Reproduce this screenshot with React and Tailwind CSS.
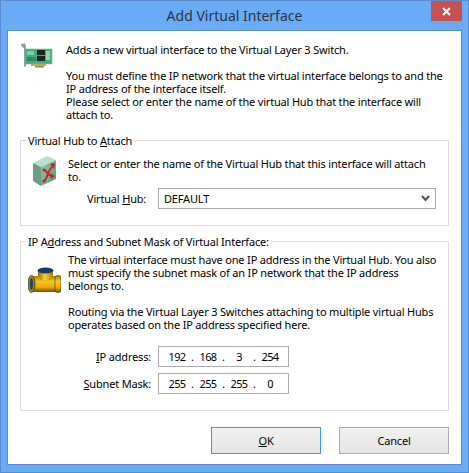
function NicIcon() {
  return (
    <svg width="34" height="28" viewBox="0 0 34 28" className="shrink-0">
      <path d="M1 1 L5 0.5 L6 3 L6 23 L4 24 L4 5 L2 4 Z" fill="#9a9a9a" />
      <rect x="5" y="6" width="27" height="15" fill="#3fae7c" />
      <rect x="5" y="6" width="27" height="15" fill="none" stroke="#6fc89c" strokeWidth="0.6" />
      <rect x="7" y="8" width="7" height="4" fill="#7fd0a4" />
      <rect x="7" y="14" width="9" height="4" fill="#2b8a5e" />
      <rect x="17" y="7" width="8" height="5" fill="#1d2420" />
      <rect x="17" y="13" width="8" height="5" fill="#1d2420" />
      <rect x="26" y="8" width="4" height="9" fill="#8fd8b0" />
      <rect x="11" y="21" width="15" height="2" fill="#c9a84a" />
      <rect x="15" y="23" width="9" height="1.5" fill="#8a8a6a" />
    </svg>
  )
}

function HubIcon() {
  return (
    <svg width="26" height="32" viewBox="0 0 26 32" className="shrink-0">
      <defs>
        <linearGradient id="hubFront" x1="0" y1="0" x2="1" y2="1">
          <stop offset="0" stopColor="#8ccbac" />
          <stop offset="1" stopColor="#4f9c7c" />
        </linearGradient>
      </defs>
      <path d="M1 8 L15 1 L24 5 L9 12 Z" fill="#b8e0cc" />
      <path d="M1 8 L9 12 L9 31 L1 26 Z" fill="#6f9a88" />
      <path d="M9 12 L24 5 L24 24 L9 31 Z" fill="url(#hubFront)" />
      <path d="M12 15 C15 15 16 22 20 21 M12 26 C15 25 16 15 20 12" fill="none" stroke="#e0141c" strokeWidth="1.8" />
      <path d="M18 9 L23 8 L22 14 Z M18 18 L23 21 L19 24 Z" fill="#e0141c" />
      <circle cx="12" cy="15" r="1.6" fill="#e0141c" />
      <circle cx="12" cy="26" r="1.6" fill="#e0141c" />
    </svg>
  )
}

function PipeIcon() {
  return (
    <svg width="33" height="26" viewBox="0 0 33 26" className="shrink-0">
      <defs>
        <linearGradient id="pipeH" x1="0" y1="0" x2="0" y2="1">
          <stop offset="0" stopColor="#a88008" />
          <stop offset="0.35" stopColor="#f9c81a" />
          <stop offset="0.7" stopColor="#eba80c" />
          <stop offset="1" stopColor="#6e5206" />
        </linearGradient>
        <linearGradient id="pipeV" x1="0" y1="0" x2="1" y2="0">
          <stop offset="0" stopColor="#8a6a08" />
          <stop offset="0.45" stopColor="#fbd02a" />
          <stop offset="1" stopColor="#a87c08" />
        </linearGradient>
      </defs>
      <rect x="10" y="3" width="15" height="11" fill="url(#pipeV)" />
      <rect x="4" y="9" width="25" height="16" fill="url(#pipeH)" />
      <path d="M10 8 L25 8 L22 13 L13 13 Z" fill="url(#pipeV)" />
      <ellipse cx="17.5" cy="3.5" rx="8" ry="3" fill="#123a70" />
      <ellipse cx="3.5" cy="17" rx="3.5" ry="8.5" fill="#b08408" stroke="#3a3208" strokeWidth="0.8" />
      <ellipse cx="3.5" cy="17" rx="1.6" ry="6" fill="#164680" />
      <rect x="27" y="8.5" width="6" height="17" rx="2.5" fill="url(#pipeH)" stroke="#4a3a06" strokeWidth="0.6" />
    </svg>
  )
}

function IpBox({ parts }) {
  return (
    <div className="w-[131px] h-[21px] shrink-0 border border-[#ababab] bg-white flex items-center pl-[4px]">
      {parts.map((part, index) => (
        <div key={index} className="w-[31px] flex items-center shrink-0">
          <span className="w-[28px] text-center tracking-[-0.7px]">{part}</span>
          {index < 3 ? <span className="w-[3px]">.</span> : null}
        </div>
      ))}
    </div>
  )
}

function App() {
  return (
    <div className="w-[469px] h-[473px] flex flex-col bg-[#6aabf5] border border-[#5a8ccb] overflow-hidden text-black text-[11px] leading-[13px] tracking-[-0.18px] font-['Noto_Sans',sans-serif]">
      <div className="h-[29px] shrink-0 flex items-center justify-center relative text-[14px] tracking-normal text-[#2b3440]">
        Add Virtual Interface
        <div className="absolute top-0 right-[6px] w-[31px] h-[20px] bg-[#c75050] flex items-center justify-center">
          <svg width="9" height="9" viewBox="0 0 9 9">
            <path d="M1 1 L8 8 M8 1 L1 8" stroke="white" strokeWidth="2" />
          </svg>
        </div>
      </div>

      <div className="mx-[6px] h-[435px] bg-white border border-[#5a8ccb] px-[12px]">
        <div className="flex pt-[12px] h-[103px]">
          <NicIcon />
          <div className="ml-[12px] whitespace-nowrap">
            <p>Adds a new virtual interface to the Virtual Layer 3 Switch.</p>
            <p className="mt-[13px]">
              You must define the IP network that the virtual interface belongs to and the
              <br />
              IP address of the interface itself.
            </p>
            <p>
              Please select or enter the name of the virtual Hub that the interface will
              <br />
              attach to.
            </p>
          </div>
        </div>

        <fieldset className="h-[92px] min-w-0 border border-[#dcdcdc] pl-[7px] pr-[8px]">
          <legend className="px-[2px] -ml-[2px]">
            Virtual Hub to <u>A</u>ttach
          </legend>
          <div className="flex mt-[8px] pl-[4px]">
            <HubIcon />
            <p className="ml-[10px] pt-[2px] whitespace-nowrap">
              Select or enter the name of the Virtual Hub that this interface will attach
              <br />
              to.
            </p>
          </div>
          <div className="flex items-center mt-[1px] ml-[59px]">
            <span className="w-[71px] whitespace-nowrap">
              Virtual <u>H</u>ub:
            </span>
            <div className="w-[278px] h-[21px] shrink-0 border border-[#ababab] flex items-center justify-between pl-[5px] pr-[5px]">
              DEFAULT
              <svg width="9" height="7" viewBox="0 0 9 7">
                <path d="M1 1 L4.5 5 L8 1" fill="none" stroke="#555" strokeWidth="2" />
              </svg>
            </div>
          </div>
        </fieldset>

        <fieldset className="h-[176px] min-w-0 mt-[9px] border border-[#dcdcdc] pl-[7px] pr-[8px]">
          <legend className="px-[2px] -ml-[2px]">
            IP A<u>d</u>dress and Subnet Mask of Virtual Interface:
          </legend>
          <div className="flex pt-[5px]">
            <div className="pt-[14px]">
              <PipeIcon />
            </div>
            <div className="ml-[7px] whitespace-nowrap">
              <p>
                The virtual interface must have one IP address in the Virtual Hub. You also
                <br />
                must specify the subnet mask of an IP network that the IP address
                <br />
                belongs to.
              </p>
              <p className="mt-[13px]">
                Routing via the Virtual Layer 3 Switches attaching to multiple virtual Hubs
                <br />
                operates based on the IP address specified here.
              </p>
            </div>
          </div>
          <div className="flex flex-col gap-[6px] mt-[15px]">
            <div className="flex items-center justify-end w-[261px]">
              <span className="mr-[7px]">
                <u>I</u>P address:
              </span>
              <IpBox parts={['192', '168', '3', '254']} />
            </div>
            <div className="flex items-center justify-end w-[261px]">
              <span className="mr-[7px]">
                <u>S</u>ubnet Mask:
              </span>
              <IpBox parts={['255', '255', '255', '0']} />
            </div>
          </div>
        </fieldset>

        <div className="flex justify-end gap-[18px] mt-[16px]">
          <button type="button" className="w-[110px] h-[27px] border border-[#3399ff] bg-gradient-to-b from-[#f0f0f0] to-[#e5e5e5]">
            <u>O</u>K
          </button>
          <button type="button" className="w-[110px] h-[27px] border border-[#acacac] bg-gradient-to-b from-[#f0f0f0] to-[#e5e5e5]">
            Cancel
          </button>
        </div>
      </div>
    </div>
  )
}

export default App
